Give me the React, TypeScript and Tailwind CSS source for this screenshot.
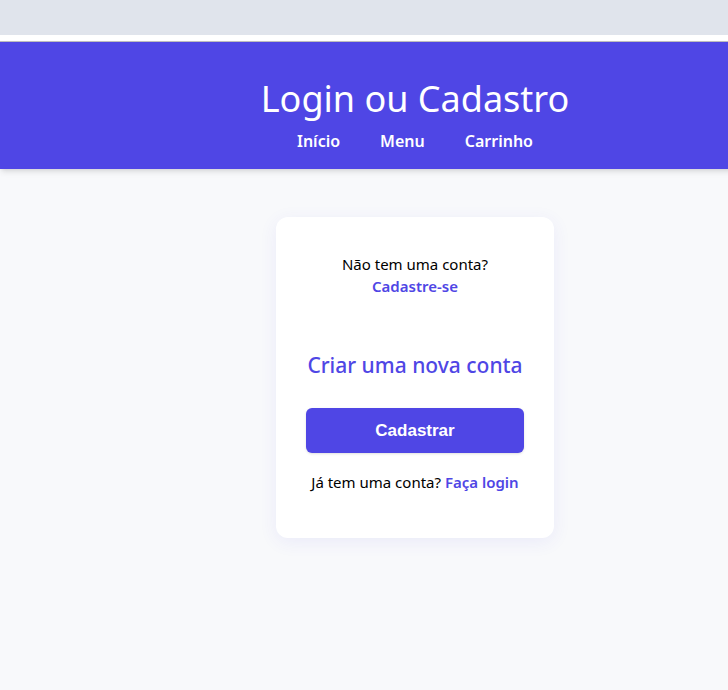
import React from 'react';

const font = { fontFamily: '"Noto Sans", "Open Sans", sans-serif' };

const App = () => {
  return (
    <div className="min-h-screen w-full overflow-x-hidden bg-[#f8f9fb]" style={font}>
      <div className="min-w-[830px]">
        {/* Browser strip */}
        <div className="h-[35px] bg-[#e0e4ec]" />
        <div className="h-[6px] bg-white" />

        {/* Header */}
        <header className="border-t border-[#bdbdbd] bg-[#4f46e5] pt-[35px] pb-[16px] text-center text-white shadow-md">
          <h1 className="text-[36px] font-normal leading-[44px]">Login ou Cadastro</h1>
          <nav className="mt-[8px] flex justify-center gap-[40px] text-[16px] font-semibold leading-[24px]">
            <a href="#">Início</a>
            <a href="#">Menu</a>
            <a href="#">Carrinho</a>
          </nav>
        </header>

        {/* Login card */}
        <main className="pt-[48px] pb-[120px]">
          <div className="mx-auto w-[278px] rounded-xl bg-white px-[30px] pt-[36px] pb-[45px] text-center shadow-[0_4px_18px_rgba(79,70,229,0.08)]">
            <p className="text-[15px] leading-[22px] text-black">Não tem uma conta?</p>
            <a href="#" className="block text-[15px] font-semibold leading-[22px] text-[#4f46e5]">
              Cadastre-se
            </a>

            <h2 className="mt-[54px] whitespace-nowrap text-[21px] font-medium leading-[28px] text-[#4f46e5]">
              Criar uma nova conta
            </h2>

            <button
              className="mt-[29px] h-[45px] w-full rounded-md bg-[#4f46e5] text-[17px] font-bold text-white shadow-sm"
              style={{ fontFamily: '"Liberation Sans", Arial, sans-serif' }}
            >
              Cadastrar
            </button>

            <p className="mt-[18px] text-[15px] leading-[22px] text-black">
              Já tem uma conta?{' '}
              <a href="#" className="font-semibold text-[#4f46e5]">
                Faça login
              </a>
            </p>
          </div>
        </main>
      </div>
    </div>
  );
};

export default App;
